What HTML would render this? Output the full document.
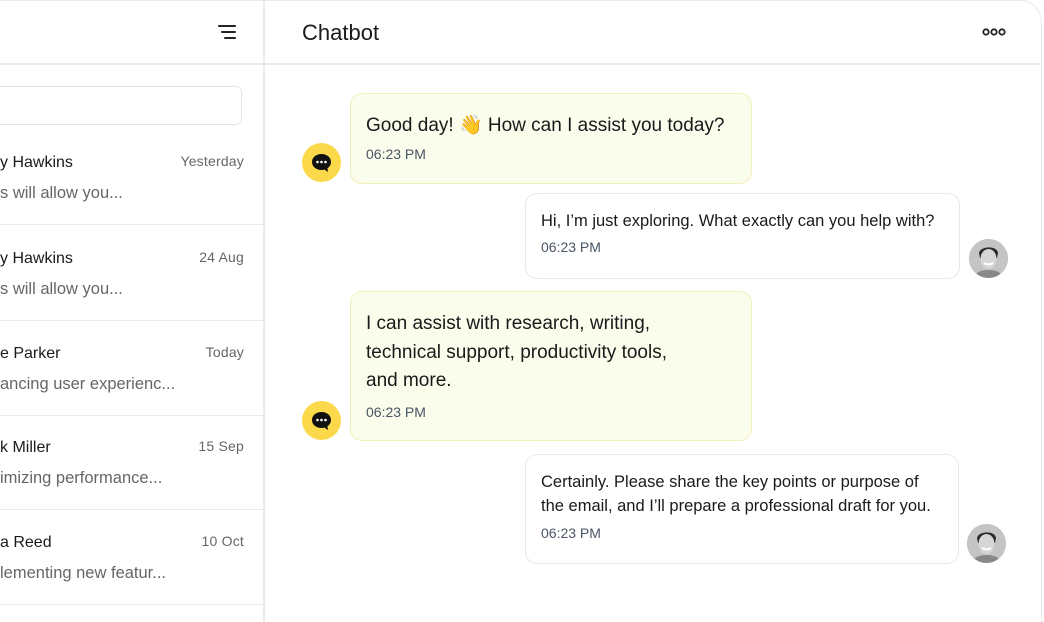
<!DOCTYPE html>
<html><head><meta charset="utf-8"><style>
*{box-sizing:border-box;margin:0;padding:0}
html,body{width:1044px;height:622px;overflow:hidden}
body{background:#fff;font-family:"Liberation Sans",sans-serif;color:#1a1a1a;position:relative}
.frame{position:absolute;left:-20px;top:0;width:1062px;height:622px;border:1.5px solid #ebebe6;border-bottom:none;border-radius:0 22px 0 0}
.vline{position:absolute;left:263px;top:0;width:1.5px;height:622px;background:#ebebe6}
.hline{position:absolute;left:0;top:63px;width:1042px;height:1.5px;background:#ebebe6}
.search{position:absolute;left:-20px;top:86px;width:262px;height:39px;border:1.5px solid #e6e6e0;border-radius:6px}
.item{position:absolute;left:0;width:263px;height:95px;border-bottom:1.5px solid #ebebe6}
.item .n{position:absolute;left:0;top:24px;font-size:16px;color:#1a1a1a}
.item .d{position:absolute;right:19px;top:23px;font-size:14px;color:#666;letter-spacing:.2px}
.item .p{position:absolute;left:0;top:54px;font-size:16.5px;color:#666}
.title{position:absolute;left:302px;top:20px;font-size:22px;color:#1a1a1a}
.bb{position:absolute;background:#fafcec;border:1.5px solid #f3efbb;border-radius:12px;padding:17px 15px}
.ub{position:absolute;background:#fff;border:1.5px solid #e9e9e4;border-radius:12px;padding:16px 15px}
.bb .t{font-size:19px;line-height:29px}
.ub .t{font-size:16.5px;line-height:24px}
.tm{font-size:14px;color:#4a5565}
.bot{position:absolute;width:39px;height:39px;border-radius:50%;background:#fcd94a}
.av{position:absolute;width:39px;height:39px;border-radius:50%;overflow:hidden;background:#bdbdbd}
</style></head><body>
<div class="frame"></div>
<div class="vline"></div><div class="hline"></div>
<svg style="position:absolute;left:218px;top:24px" width="18" height="16" viewBox="0 0 18 16"><path d="M1 2h16M4 8h13M7 14h10" stroke="#222" stroke-width="2" stroke-linecap="round"/></svg>
<div class="search"></div>
<div class="item" style="top:130px"><div class="n">y Hawkins</div><div class="d">Yesterday</div><div class="p">s will allow you...</div></div>
<div class="item" style="top:226px"><div class="n">y Hawkins</div><div class="d">24 Aug</div><div class="p">s will allow you...</div></div>
<div class="item" style="top:321px"><div class="n">e Parker</div><div class="d">Today</div><div class="p">ancing user experienc...</div></div>
<div class="item" style="top:415px"><div class="n">k Miller</div><div class="d">15 Sep</div><div class="p">imizing performance...</div></div>
<div class="item" style="top:510px"><div class="n">a Reed</div><div class="d">10 Oct</div><div class="p">lementing new featur...</div></div>
<div class="title">Chatbot</div>
<svg style="position:absolute;left:982px;top:27px" width="24" height="10" viewBox="0 0 24 10"><g fill="none" stroke="#222" stroke-width="1.8"><circle cx="4" cy="5" r="2.7"/><circle cx="12" cy="5" r="2.7"/><circle cx="20" cy="5" r="2.7"/></g></svg>

<div class="bb" style="left:350px;top:93px;width:402px;height:91px"><div class="t">Good day! 👋 How can I assist you today?</div><div class="tm" style="margin-top:6px">06:23 PM</div></div>
<div class="bot" style="left:302px;top:143px"><svg width="39" height="39" viewBox="0 0 39 39"><path d="M19.5 11c-5.5 0-9.5 3.4-9.5 8s4 8 9.5 8c1 0 2-.1 2.9-.4l3.6 2.4-.6-3.6c2.2-1.5 3.6-3.8 3.6-6.4 0-4.6-4-8-9.5-8z" fill="#111"/><circle cx="15.5" cy="19" r="1.3" fill="#fff"/><circle cx="19.5" cy="19" r="1.3" fill="#fff"/><circle cx="23.5" cy="19" r="1.3" fill="#fff"/></svg></div>

<div class="ub" style="left:525px;top:193px;width:435px;height:86px"><div class="t" style="margin-top:-1px">Hi, I’m just exploring. What exactly can you help with?</div><div class="tm" style="margin-top:6px">06:23 PM</div></div>
<div class="av" style="left:969px;top:239px"><svg width="39" height="39" viewBox="0 0 39 39"><rect width="39" height="39" fill="#c4c4c4"/><path d="M10 14c1-7 18-8 19 0l-1 5H11z" fill="#2a2a2a"/><ellipse cx="19.5" cy="20" rx="8" ry="10" fill="#d6d6d6"/><path d="M15 24q4.5 3 9 0" stroke="#fff" stroke-width="2" fill="none"/><path d="M5 39q2-8 14.5-8T34 39z" fill="#888"/></svg></div>

<div class="bb" style="left:350px;top:291px;width:402px;height:150px"><div class="t" style="margin-top:1px;width:320px;line-height:28.5px">I can assist with research, writing, technical support, productivity tools, and more.</div><div class="tm" style="margin-top:8px">06:23 PM</div></div>
<div class="bot" style="left:302px;top:401px"><svg width="39" height="39" viewBox="0 0 39 39"><path d="M19.5 11c-5.5 0-9.5 3.4-9.5 8s4 8 9.5 8c1 0 2-.1 2.9-.4l3.6 2.4-.6-3.6c2.2-1.5 3.6-3.8 3.6-6.4 0-4.6-4-8-9.5-8z" fill="#111"/><circle cx="15.5" cy="19" r="1.3" fill="#fff"/><circle cx="19.5" cy="19" r="1.3" fill="#fff"/><circle cx="23.5" cy="19" r="1.3" fill="#fff"/></svg></div>

<div class="ub" style="left:525px;top:454px;width:434px;height:110px"><div class="t" style="margin-top:-1px;width:402px">Certainly. Please share the key points or purpose of the email, and I’ll prepare a professional draft for you.</div><div class="tm" style="margin-top:7px">06:23 PM</div></div>
<div class="av" style="left:967px;top:524px"><svg width="39" height="39" viewBox="0 0 39 39"><rect width="39" height="39" fill="#c4c4c4"/><path d="M10 14c1-7 18-8 19 0l-1 5H11z" fill="#2a2a2a"/><ellipse cx="19.5" cy="20" rx="8" ry="10" fill="#d6d6d6"/><path d="M15 24q4.5 3 9 0" stroke="#fff" stroke-width="2" fill="none"/><path d="M5 39q2-8 14.5-8T34 39z" fill="#888"/></svg></div>
</body></html>
